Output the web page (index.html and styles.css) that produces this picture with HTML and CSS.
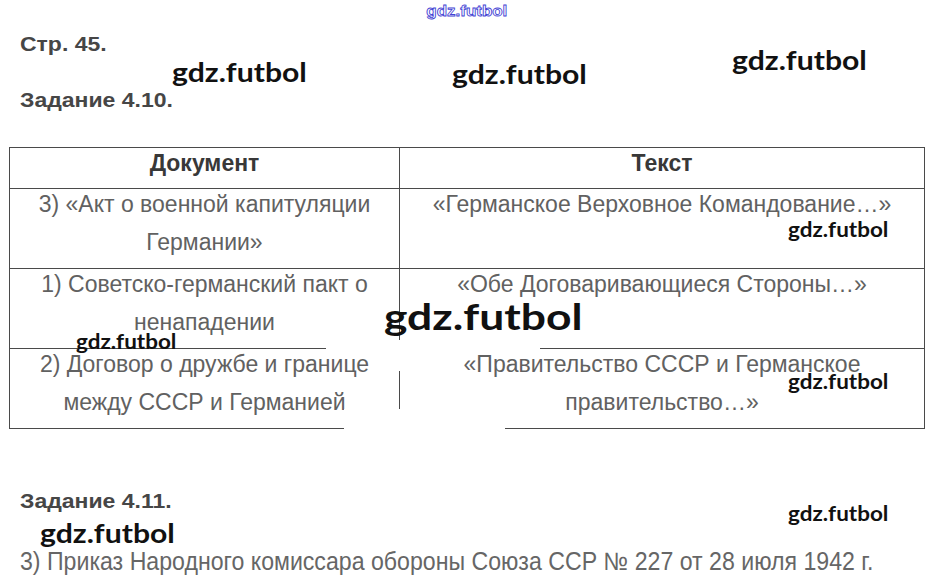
FILE: index.html
```html
<!DOCTYPE html>
<html lang="ru">
<head>
<meta charset="utf-8">
<link rel="stylesheet" href="styles.css">
</head>
<body>
<div class="page">
  <div class="top-mark"><span class="top-mark-text">gdz.futbol</span></div>
  <h2 class="head head-page">Стр. 45.</h2>
  <h2 class="head head-task1">Задание 4.10.</h2>
  <table class="tbl">
    <colgroup><col class="c1"><col class="c2"></colgroup>
    <thead>
      <tr><th>Документ</th><th>Текст</th></tr>
    </thead>
    <tbody>
      <tr><td><div class="cell">3) «Акт о военной капитуляции Германии»</div></td><td><div class="cell">«Германское Верховное Командование…»</div></td></tr>
      <tr><td><div class="cell">1) Советско-германский пакт о ненападении</div></td><td><div class="cell">«Обе Договаривающиеся Стороны…»</div></td></tr>
      <tr><td><div class="cell">2) Договор о дружбе и границе между СССР и Германией</div></td><td><div class="cell">«Правительство СССР и Германское правительство…»</div></td></tr>
    </tbody>
  </table>
  <h2 class="head head-task2">Задание 4.11.</h2>
  <p class="answer">3) Приказ Народного комиссара обороны Союза ССР № 227 от 28 июля 1942 г.</p>

  <div class="erase erase-a"></div>
  <div class="erase erase-c"></div>
  <div class="erase erase-b"></div>

  <span class="wm wm-m wm1">gdz.futbol</span>
  <span class="wm wm-m wm2">gdz.futbol</span>
  <span class="wm wm-m wm3">gdz.futbol</span>
  <span class="wm wm-s wm4">gdz.futbol</span>
  <span class="wm wm-xl wm5">gdz.futbol</span>
  <span class="wm wm-s wm6">gdz.futbol</span>
  <span class="wm wm-s wm7">gdz.futbol</span>
  <span class="wm wm-s wm8">gdz.futbol</span>
  <span class="wm wm-m wm9">gdz.futbol</span>
</div>
</body>
</html>
```

FILE: styles.css
```css
* { box-sizing: border-box; }
html, body { margin: 0; padding: 0; background: #fff; }
body { font-family: "Liberation Sans", Arial, sans-serif; color: #555; }
.page { position: relative; width: 932px; height: 584px; overflow: hidden; padding: 0 9px; }

.top-mark {
  margin: 0 -9px;
  height: 22px;
  display: flex;
  justify-content: center;
}
.top-mark-text {
  display: inline-block;
  font-family: "Liberation Sans", Arial, sans-serif;
  font-weight: bold;
  font-size: 15px;
  line-height: 22px;
  color: #fff;
  -webkit-text-stroke: 0.8px #4444d4;
  transform: scaleX(1.13);
  margin-left: 2px;
}

.head {
  width: max-content;
  margin: 0 0 0 11px;
  font-size: 20px;
  font-weight: bold;
  color: #464646;
  line-height: 22px;
  transform: scaleX(1.15);
  transform-origin: left center;
}
.head-page { margin-top: 11px; }
.head-task1 { margin-top: 34px; }
.head-task2 { margin-top: 61px; }

.tbl {
  margin-top: 36px;
  width: 915px;
  border-collapse: collapse;
  table-layout: fixed;
  font-size: 23px;
}
.c1 { width: 390px; }
.c2 { width: 525px; }
.tbl th, .tbl td {
  border: 1px solid #4a4a4a;
  padding: 0 12px;
  text-align: center;
  vertical-align: top;
}
.tbl th {
  font-weight: bold;
  color: #383838;
  line-height: 30px;
  height: 41px;
  padding-bottom: 10px;
}
.tbl td { color: #616161; height: 80px; line-height: 38px; }
.cell { margin-top: -4px; }

.answer {
  width: max-content;
  margin: 35px 0 0 11px;
  font-family: "Liberation Sans", Arial, sans-serif;
  font-size: 25px;
  line-height: 28px;
  color: #666;
  white-space: nowrap;
  transform: scaleX(0.925);
  transform-origin: left center;
}

.erase { position: absolute; background: #fff; }
.erase-a { left: 326px; top: 340px; width: 214px; height: 14px; }
.erase-c { left: 372px; top: 340px; width: 88px; height: 31px; }
.erase-b { left: 344px; top: 409px; width: 161px; height: 30px; }

.wm {
  position: absolute;
  font-family: Lato, "Open Sans", sans-serif;
  font-weight: bold;
  color: #111;
  white-space: nowrap;
  line-height: 1;
  transform-origin: left center;
}
.wm-m { font-size: 26px; transform: scaleX(1.16); }
.wm-s { font-size: 21px; transform: scaleX(1.07); }
.wm-xl { font-size: 37px; transform: scaleX(1.2); }
.wm1 { left: 172px; top: 59px; }
.wm2 { left: 452px; top: 61px; }
.wm3 { left: 732px; top: 47px; }
.wm4 { left: 788px; top: 218px; }
.wm5 { left: 384px; top: 297px; }
.wm6 { left: 76px; top: 330px; }
.wm7 { left: 788px; top: 370px; }
.wm8 { left: 788px; top: 502px; }
.wm9 { left: 40px; top: 520px; }
```
